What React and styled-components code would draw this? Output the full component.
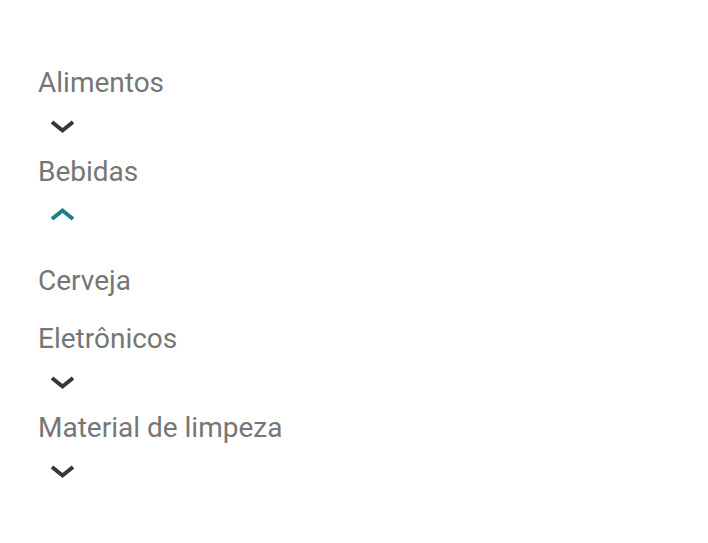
import React, { useState } from "react";
import styled, { createGlobalStyle } from "styled-components";

const Global = createGlobalStyle`
  html, body { margin: 0; padding: 0; background: #ffffff; }
  body { font-family: Roboto, "Noto Sans", "Liberation Sans", sans-serif; }
`;

const Page = styled.div`
  padding: 63px 0 0 38px;
`;

const List = styled.ul`
  list-style: none;
  margin: 0;
  padding: 0;
`;

const Item = styled.li`
  display: flex;
  flex-direction: column;
  align-items: flex-start;
`;

const Title = styled.span`
  font-size: 28px;
  line-height: 40px;
  color: #767676;
  font-weight: 400;
`;

const Toggle = styled.button`
  display: block;
  border: 0;
  background: transparent;
  padding: 11px 0 18px 10px;
  margin: 0;
  cursor: pointer;
  line-height: 0;
  color: ${(p) => (p.$open ? "#1b7f87" : "#383838")};
`;

const SubList = styled.ul`
  list-style: none;
  margin: 0;
  padding: 20px 0 18px 0;
`;

const SubItem = styled.li`
  font-size: 28px;
  line-height: 40px;
  color: #767676;
`;

const Chevron = ({ up }) => (
  <svg width="29" height="20" viewBox="0 0 29 20" fill="none">
    <polyline
      points={up ? "4,16 14.5,7.5 25,16" : "4,8 14.5,16.5 25,8"}
      stroke="currentColor"
      strokeWidth="4"
      strokeLinejoin="miter"
      strokeLinecap="butt"
    />
  </svg>
);

const categories = [
  { name: "Alimentos", children: [] },
  { name: "Bebidas", children: ["Cerveja"] },
  { name: "Eletrônicos", children: [] },
  { name: "Material de limpeza", children: [] },
];

export default function App() {
  const [open, setOpen] = useState("Bebidas");
  return (
    <Page>
      <Global />
      <List>
        {categories.map((c) => {
          const isOpen = open === c.name;
          return (
            <Item key={c.name}>
              <Title>{c.name}</Title>
              <Toggle
                $open={isOpen}
                aria-label={isOpen ? "Recolher" : "Expandir"}
                onClick={() => setOpen(isOpen ? null : c.name)}
              >
                <Chevron up={isOpen} />
              </Toggle>
              {isOpen && (
                <SubList>
                  {c.children.map((s) => (
                    <SubItem key={s}>{s}</SubItem>
                  ))}
                </SubList>
              )}
            </Item>
          );
        })}
      </List>
    </Page>
  );
}
